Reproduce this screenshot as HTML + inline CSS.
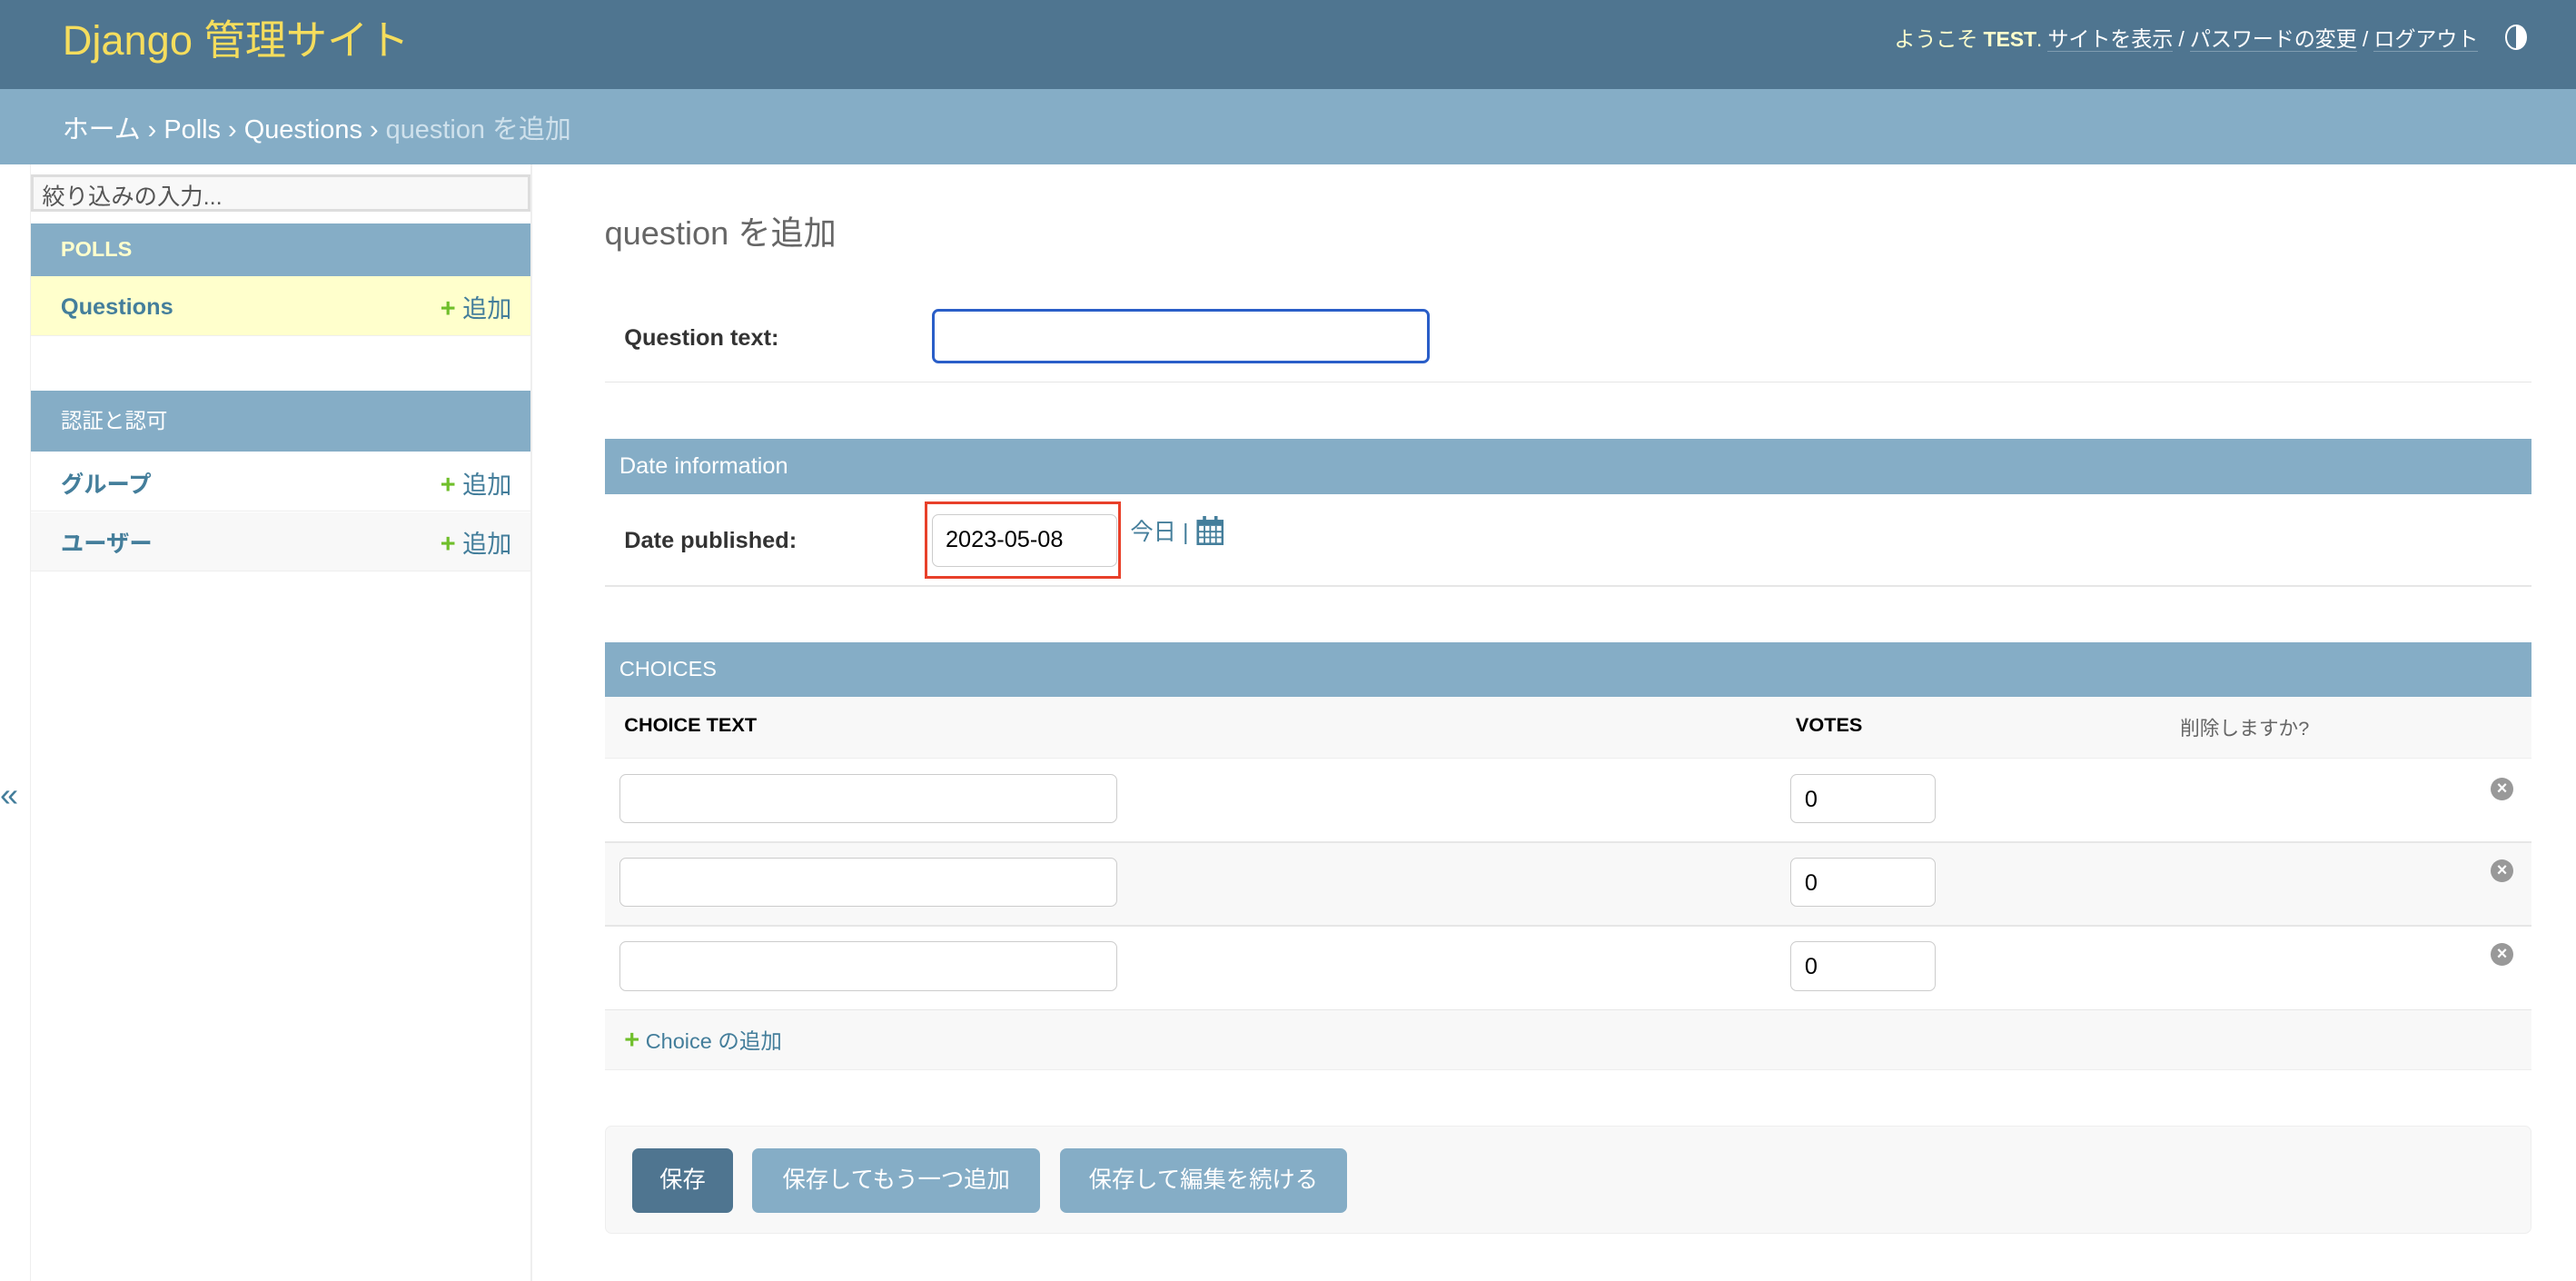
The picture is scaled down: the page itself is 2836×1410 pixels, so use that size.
<!DOCTYPE html>
<html><head><meta charset="utf-8"><style>
html,body{margin:0;padding:0;width:2836px;height:1410px;overflow:hidden;background:#fff}
#z{zoom:1.80867;width:1568px;height:780px;position:relative;font-family:"Liberation Sans","Noto Sans CJK JP",sans-serif;font-size:14px;color:#333}
.a{position:absolute}
.hdr{left:0;top:0;width:1568px;height:54px;background:#4f7590}
.bc{left:0;top:54px;width:1568px;height:46px;background:#85adc6}
.inp{position:absolute;background:#fff;border:1px solid #ccc;border-radius:4px;box-sizing:border-box}
.cap{position:absolute;background:#85adc6;color:#fff;font-size:14px;box-sizing:border-box;padding-left:9px}
.hl{position:absolute;height:1px;background:#e6e6e6}
.plus{color:#70bf2b;font-weight:bold;font-size:16px}
.x{position:absolute;width:14px;height:14px;border-radius:50%;background:#999;color:#fff;font-size:11px;font-weight:bold;text-align:center;line-height:14px}
.btn{position:absolute;top:699px;height:39px;border-radius:4px;color:#fff;font-size:14px;text-align:center;line-height:39px;background:#85adc6}
</style></head><body><div id="z">
<div class="a hdr"></div>
<div class="a" style="left:38px;top:5px;font-size:25px;color:#f5dd5d">Django 管理サイト</div>
<div class="a" style="left:1153px;top:13px;font-size:12.8px;letter-spacing:-0.1px;color:#ffc;white-space:nowrap">ようこそ <b>TEST</b>. <span style="color:#fff;border-bottom:1px solid #7f9cb0">サイトを表示</span> <span style="color:#fff">/</span> <span style="color:#fff;border-bottom:1px solid #7f9cb0">パスワードの変更</span> <span style="color:#fff">/</span> <span style="color:#fff;border-bottom:1px solid #7f9cb0">ログアウト</span></div>
<div class="a" style="left:1525px;top:15px;width:11px;height:13px;border:1.5px solid #fff;border-radius:50%;background:linear-gradient(90deg,#4f7590 50%,#fff 50%)"></div>
<div class="a bc"></div>
<div class="a" style="left:38px;top:66px;font-size:16px;color:#fff">ホーム › Polls › Questions › <span style="color:#cfe1ec">question を追加</span></div>

<div class="a" style="left:18px;top:100px;width:1px;height:680px;background:#eee"></div>
<div class="a" style="left:323px;top:100px;width:1px;height:680px;background:#eee"></div>
<div class="a" style="left:19px;top:106px;width:304px;height:23px;border:2px solid #ddd;background:#f8f8f8;box-sizing:border-box;font-size:14px;color:#555;padding:1px 5px">絞り込みの入力...</div>
<div class="cap" style="left:19px;top:136px;width:304px;height:32px;line-height:32px;padding-left:18px;font-weight:bold;color:#ffc;font-size:13px">POLLS</div>
<div class="a" style="left:19px;top:168px;width:304px;height:36px;background:#ffc;border-bottom:1px solid #eee"></div>
<div class="a" style="left:37px;top:179px;color:#447e9b;font-weight:bold">Questions</div>
<div class="a" style="left:268px;top:176px;color:#447e9b;font-size:15px"><span class="plus">+</span> 追加</div>
<div class="cap" style="left:19px;top:238px;width:304px;height:37px;line-height:37px;padding-left:18px;font-size:13px">認証と認可</div>
<div class="a" style="left:19px;top:275px;width:304px;height:36px;border-bottom:1px solid #eee"></div>
<div class="a" style="left:37px;top:284px;color:#447e9b;font-weight:bold">グループ</div>
<div class="a" style="left:268px;top:283px;color:#447e9b;font-size:15px"><span class="plus">+</span> 追加</div>
<div class="a" style="left:19px;top:312px;width:304px;height:35px;background:#f8f8f8;border-bottom:1px solid #eee"></div>
<div class="a" style="left:37px;top:320px;color:#447e9b;font-weight:bold">ユーザー</div>
<div class="a" style="left:268px;top:319px;color:#447e9b;font-size:15px"><span class="plus">+</span> 追加</div>
<div class="a" style="left:0px;top:472px;font-size:20px;color:#447e9b">«</div>

<div class="a" style="left:368px;top:126px;font-size:20px;color:#666">question を追加</div>
<div class="a" style="left:380px;top:198px;font-weight:bold;color:#333">Question text:</div>
<div class="inp" style="left:567px;top:188px;width:303px;height:33px;border:2px solid #2a5ec8"></div>
<div class="hl" style="left:368px;top:232px;width:1173px"></div>

<div class="cap" style="left:368px;top:267px;width:1173px;height:34px;line-height:34px">Date information</div>
<div class="a" style="left:380px;top:321px;font-weight:bold">Date published:</div>
<div class="a" style="left:563px;top:305px;width:119px;height:47px;border:2px solid #e8402a;box-sizing:border-box"></div>
<div class="inp" style="left:567px;top:313px;width:113px;height:32px;padding:7px 8px;font-size:14px;color:#000">2023-05-08</div>
<div class="a" style="left:688px;top:313px;color:#447e9b">今日 | </div>
<svg class="a" style="left:728px;top:314px" width="17" height="18" viewBox="0 0 17 18"><rect x="1" y="3" width="15" height="14" fill="none" stroke="#447e9b" stroke-width="1.5"/><rect x="1" y="3" width="15" height="3" fill="#447e9b"/><rect x="4" y="0" width="2" height="4" fill="#447e9b"/><rect x="11" y="0" width="2" height="4" fill="#447e9b"/><path d="M1 9.5H16M1 13H16M5 6V17M8.5 6V17M12 6V17" stroke="#447e9b" stroke-width="1"/></svg>
<div class="hl" style="left:368px;top:356px;width:1173px"></div>

<div class="cap" style="left:368px;top:391px;width:1173px;height:33px;line-height:33px;font-size:13px">CHOICES</div>
<div class="a" style="left:368px;top:424px;width:1173px;height:37px;background:#f8f8f8;border-bottom:1px solid #eee"></div>
<div class="a" style="left:380px;top:434px;font-size:12px;font-weight:bold;color:#000">CHOICE TEXT</div>
<div class="a" style="left:1093px;top:434px;font-size:12px;font-weight:bold;color:#000">VOTES</div>
<div class="a" style="left:1327px;top:434px;font-size:12px;color:#666">削除しますか?</div>

<div class="a" style="left:368px;top:512px;width:1173px;height:51px;background:#f8f8f8"></div>
<div class="hl" style="left:368px;top:512px;width:1173px"></div>
<div class="hl" style="left:368px;top:563px;width:1173px"></div>
<div class="hl" style="left:368px;top:614px;width:1173px"></div>
<div class="inp" style="left:377px;top:471px;width:303px;height:30px"></div>
<div class="inp" style="left:377px;top:522px;width:303px;height:30px"></div>
<div class="inp" style="left:377px;top:573px;width:303px;height:30px"></div>
<div class="inp" style="left:1090px;top:471px;width:88px;height:30px;padding:7px 8px;color:#000">0</div>
<div class="inp" style="left:1090px;top:522px;width:88px;height:30px;padding:7px 8px;color:#000">0</div>
<div class="inp" style="left:1090px;top:573px;width:88px;height:30px;padding:7px 8px;color:#000">0</div>
<div class="x" style="left:1516px;top:473px">×</div>
<div class="x" style="left:1516px;top:523px">×</div>
<div class="x" style="left:1516px;top:574px">×</div>
<div class="a" style="left:368px;top:615px;width:1173px;height:36px;background:#f8f8f8;border-bottom:1px solid #eee"></div>
<div class="a" style="left:380px;top:623px;color:#447e9b;font-size:13px"><span class="plus">+</span> Choice の追加</div>

<div class="a" style="left:368px;top:685px;width:1173px;height:66px;background:#f8f8f8;border:1px solid #eee;border-radius:4px;box-sizing:border-box"></div>
<div class="btn" style="left:385px;width:61px;background:#4f7590">保存</div>
<div class="btn" style="left:458px;width:175px">保存してもう一つ追加</div>
<div class="btn" style="left:645px;width:175px">保存して編集を続ける</div>
</div></body></html>
